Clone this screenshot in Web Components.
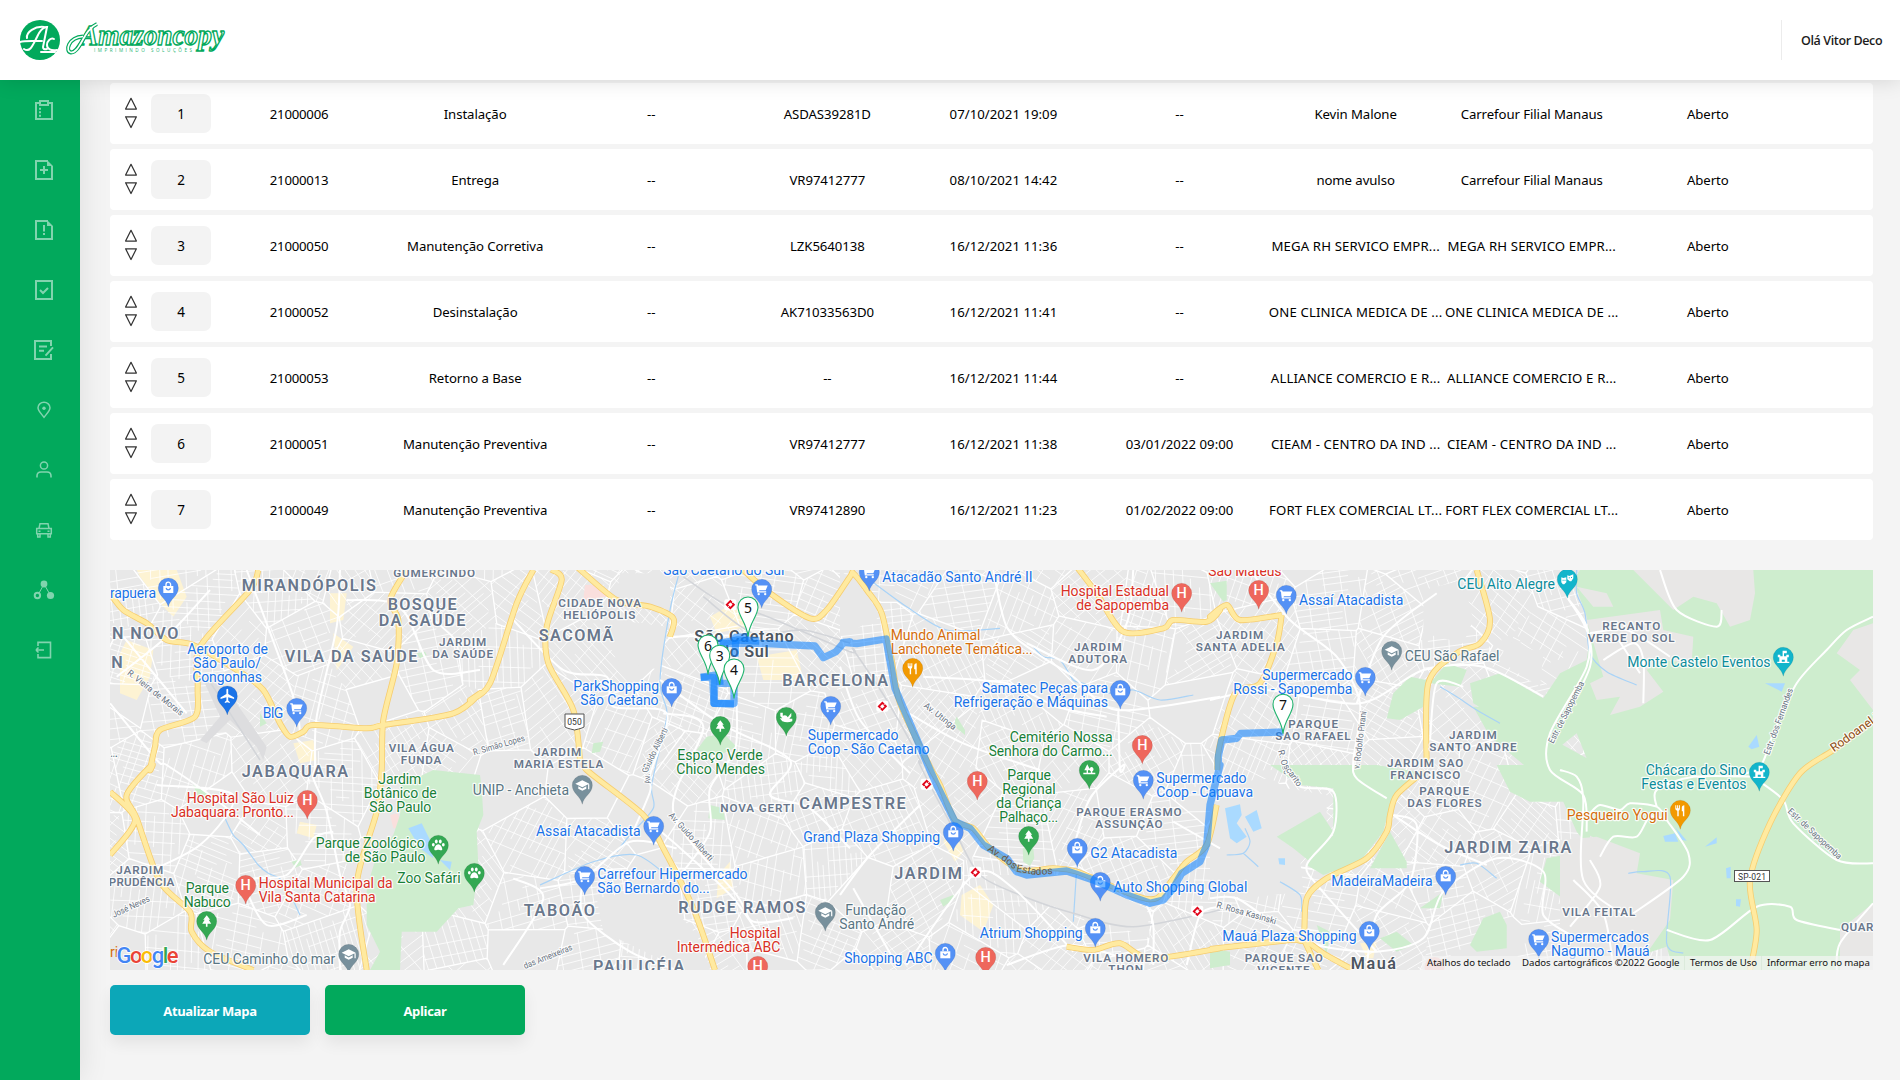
<!DOCTYPE html>
<html lang="pt-BR">
<head>
<meta charset="utf-8">
<title>Amazoncopy</title>
<style>
  html, body { margin: 0; height: 100%; overflow: hidden; }
  body { background: #f4f4f4; font-family: "Noto Sans", "Open Sans", sans-serif; color: #000; }
</style>
</head>
<body>
<app-shell>
  <app-header slot="header" user="Olá Vitor Deco"></app-header>
  <side-nav slot="nav"></side-nav>
  <ticket-list></ticket-list>
  <route-map></route-map>
  <action-bar>
    <action-button tone="teal">Atualizar Mapa</action-button>
    <action-button tone="green">Aplicar</action-button>
  </action-bar>
</app-shell>

<script>
class Base extends HTMLElement {
  connectedCallback() {
    if (this.shadowRoot) return;
    this.attachShadow({ mode: 'open' }).innerHTML = this.view();
  }
}

customElements.define('app-shell', class extends Base {
  view() {
    return `<style>
      :host { display: flex; flex-direction: column; width: 1900px; height: 1080px; overflow: hidden; }
      .body { display: flex; flex: 1; min-height: 0; }
      main { flex: 1; box-sizing: border-box; padding: 3px 27px 0 30px; display: flex; flex-direction: column; }
    </style>
    <slot name="header"></slot>
    <div class="body"><slot name="nav"></slot><main><slot></slot></main></div>`;
  }
});

customElements.define('app-header', class extends Base {
  view() {
    return `<style>
      :host { display: flex; position: relative; z-index: 2; height: 80px; flex: none; background: #fff; align-items: center; justify-content: space-between; padding: 0 17px 0 20px; box-shadow: 0 0 20px rgba(0,0,0,.14); }
      .user { display: flex; align-items: center; height: 40px; border-left: 1px solid #ececec; padding-left: 19px; font: 600 12.5px "Open Sans", sans-serif; color: #1c1c1c; letter-spacing: -.38px; white-space: nowrap; }
      .user span { width: 82px; }
      svg { display: block; }
    </style>
    <svg width="210" height="44" viewBox="20 18 210 44">
      <circle cx="40" cy="40" r="20" fill="#02a95c"/>
      <g fill="none" stroke="#fff" stroke-width="2" stroke-linecap="round">
        <path d="M20 42q3-1 12-1h10M24 49c6 4 9-4 13-12q4-9 9-10h1l-4 20q0 3 4 2"/>
        <path d="M27 38c-1-6 8-12 17-11M54 39c-3-2-7 2-7 6s4 6 10 5M41 52h14"/>
      </g>
      <g font-family="Liberation Serif" font-style="italic" font-weight="700">
        <path d="M97 24C83 30 81 52 71 52.500c-6-1-3-15 12-16" fill="none" stroke="#02a95c" stroke-width="4"/>
        <text x="80" y="45" font-size="30" fill="#fff" stroke="#02a95c" stroke-width="1.400" textLength="144" lengthAdjust="spacingAndGlyphs">Amazoncopy</text>
        <path d="M97 24C83 30 81 52 71 52.500c-6-1-3-15 12-16" fill="none" stroke="#fff" stroke-width="1.700"/>
      </g>
      <text x="94" y="52.300" font-family="Open Sans" font-size="4.600" fill="#1eb36f" textLength="98">IMPRIMINDO SOLUÇÕES</text>
    </svg>
    <div class="user"><span>${this.getAttribute('user')}</span></div>`;
  }
});

customElements.define('side-nav', class extends Base {
  view() {
    const icons = [
      '<path d="M-5-7H-8V9H8V-7H5"/><path d="M-4-9H4V-5H-4z"/><path d="M-5-1.2h2M-5 2.3h2M-5 5.8h2"/>',
      '<path d="M4-9H-8V9H8V-4"/><path d="M3-10L9-4H3z" fill="#fff" stroke="none"/><path d="M0-4V4M-4 0H4"/>',
      '<path d="M4-9H-8V9H8V-4"/><path d="M3-10L9-4H3z" fill="#fff" stroke="none"/><path d="M0-5V1.5M0 3v2"/>',
      '<path d="M-8-9H8V9H-8z"/><path d="M-4 0l3 3 5-5"/>',
      '<path d="M7-4V-9H-9V9H7V4"/><path d="M-5-3.4H3M-5 .8H0M1.5 5.7L9-2.6"/>',
      '<path stroke-width="1.500" d="M0 7.300C-2 4.500-6 1-6-2.200A6 5.500 0 0 1 6-2.200C6 1 2 4.500 0 7.300z"/><circle cy="-1.700" r="1.700" fill="#fff" stroke="none"/>',
      '<circle stroke-width="1.500" cy="-4.500" r="3.600"/><path stroke-width="1.600" d="M-7 7.500V6Q-7 2-3 2H3Q7 2 7 6V7.500"/>',
      '<g stroke-width="1.500"><path d="M-5-1.500L-4-6.300H4L5-1.500M-7.300-1.500H7.300V3.700H-7.300zM-6.300 4v3H-4V4M6.300 4v3H4V4"/><path d="M-5.500 1.200h2M3.500 1.200h2"/></g>',
      '<path stroke-width="1" d="M0-6L-6 5M0-6L6.500 5.500"/><circle cy="-6" r="3.400" fill="#fff" stroke="none"/><circle cx="6.500" cy="5.500" r="3.600" fill="#fff" stroke="none"/><circle cx="-6.600" cy="5.500" r="2.700" fill="#02a95c"/>',
      '<path stroke-width="1.600" d="M-6-4V-7.600H6.500V7.600H-6V4M0 0H-8M-8 0l2.500-2.500M-8 0l2.500 2.500"/>'
    ];
    return `<style>
      :host { display: flex; flex-direction: column; width: 80px; flex: none; background: #02a95c; box-shadow: 0 0 30px rgba(0,0,0,.1); }
      a { display: flex; height: 60px; align-items: center; justify-content: center; padding-left: 8px; }
      svg { opacity: .5; }
    </style>` + icons.map(i => `<a><svg width="24" height="24" viewBox="-12 -12 24 24" fill="none" stroke="#fff" stroke-width="2">${i}</svg></a>`).join('');
  }
});

customElements.define('ticket-row', class extends Base {
  view() {
    const cells = this.getAttribute('cells').split('|');
    return `<style>
      :host { display: flex; height: 61px; background: #fff; border-radius: 4px; align-items: center; }
      .idx { display: flex; width: 101px; align-items: center; flex: none; }
      .arrows { display: flex; flex-direction: column; gap: 4px; margin: 0 13px 2px 14px; }
      svg { display: block; }
      .num { width: 60px; height: 39px; border-radius: 7px; background: #f3f3f3; display: flex; align-items: center; justify-content: center; font-size: 13.500px; }
      .cell { width: 176.100px; flex: none; text-align: center; font-size: 13.200px; letter-spacing: -.08px; white-space: nowrap; }
      .cell.cut { letter-spacing: .14px; }
      .cell.digits { letter-spacing: -.22px; }
      .cell.when { letter-spacing: .02px; }
    </style>
    <div class="idx"><div class="arrows">
      <svg width="14" height="14" viewBox="0 0 14 14" fill="#fff" stroke="#333" stroke-width="1.250" stroke-linejoin="round"><path d="M7 1.300L12.400 12H1.600z"/></svg>
      <svg width="14" height="14" viewBox="0 0 14 14" fill="#fff" stroke="#333" stroke-width="1.250" stroke-linejoin="round"><path d="M7 12.500L1.600 1.800H12.400z"/></svg>
    </div><div class="num">${cells[0]}</div></div>` +
    cells.slice(1).map(c => `<div class="cell ${c.endsWith('...') ? 'cut' : /\d\d:\d\d/.test(c) ? 'when' : /^\d+$/.test(c) ? 'digits' : ''}">${c}</div>`).join('');
  }
});

customElements.define('ticket-list', class extends Base {
  view() {
    const rows = [
      '1|21000006|Instalação|--|ASDAS39281D|07/10/2021 19:09|--|Kevin Malone|Carrefour Filial Manaus|Aberto',
      '2|21000013|Entrega|--|VR97412777|08/10/2021 14:42|--|nome avulso|Carrefour Filial Manaus|Aberto',
      '3|21000050|Manutenção Corretiva|--|LZK5640138|16/12/2021 11:36|--|MEGA RH SERVICO EMPR...|MEGA RH SERVICO EMPR...|Aberto',
      '4|21000052|Desinstalação|--|AK71033563D0|16/12/2021 11:41|--|ONE CLINICA MEDICA DE ...|ONE CLINICA MEDICA DE ...|Aberto',
      '5|21000053|Retorno a Base|--|--|16/12/2021 11:44|--|ALLIANCE COMERCIO E R...|ALLIANCE COMERCIO E R...|Aberto',
      '6|21000051|Manutenção Preventiva|--|VR97412777|16/12/2021 11:38|03/01/2022 09:00|CIEAM - CENTRO DA IND ...|CIEAM - CENTRO DA IND ...|Aberto',
      '7|21000049|Manutenção Preventiva|--|VR97412890|16/12/2021 11:23|01/02/2022 09:00|FORT FLEX COMERCIAL LT...|FORT FLEX COMERCIAL LT...|Aberto'
    ];
    return `<style>:host { display: flex; flex-direction: column; gap: 5px; }</style>` +
      rows.map(r => `<ticket-row cells="${r}"></ticket-row>`).join('');
  }
});

customElements.define('action-bar', class extends Base {
  view() { return `<style>:host { display: flex; gap: 15px; margin-top: 15px; }</style><slot></slot>`; }
});

customElements.define('action-button', class extends Base {
  view() {
    return `<style>
      :host { display: block; }
      button { width: 200px; height: 50px; border: 0; border-radius: 5px; color: #fff; font: 700 13px "Open Sans", sans-serif; letter-spacing: -.38px; padding: 2px 0 0; box-shadow: 0 8px 16px rgba(0,0,0,.07); background: ${this.getAttribute('tone') === 'teal' ? '#0ca7b8' : '#02a95c'}; }
    </style><button><slot></slot></button>`;
  }
});

/* ---- map data: every point is tile letter + tile units (3 units = 1px) ---- */
const TILES = { A: [100, 560], B: [100, 765], C: [470, 560], D: [470, 765], E: [840, 560], F: [840, 765], G: [1210, 560], H: [1210, 765], K: [1560, 560] };
const at = (t, x, y) => [TILES[t][0] + x / 3, TILES[t][1] + y / 3];
const f1 = n => Math.round(n * 10) / 10;
function pts(s) {
  let t = 'A';
  return s.trim().split(/\s+/).map(k => {
    if (/[A-Z]/.test(k[0])) { t = k[0]; k = k.slice(1); }
    const [x, y] = k.split(',').map(Number);
    return at(t, x, y);
  });
}
const poly = s => 'M' + pts(s).map(p => p.map(f1).join(' ')).join('L');
function curve(s) {
  const p = pts(s); let d = 'M' + p[0].map(f1).join(' ');
  for (let i = 0; i < p.length - 1; i++) {
    const a = p[i - 1] || p[i], b = p[i], c = p[i + 1], e = p[i + 2] || c;
    d += 'C' + [b[0] + (c[0] - a[0]) / 7, b[1] + (c[1] - a[1]) / 7, c[0] - (e[0] - b[0]) / 7, c[1] - (e[1] - b[1]) / 7, c[0], c[1]].map(f1).join(' ');
  }
  return d;
}

/* Local streets: irregular districts, each with its own block grid. */
function streets() {
  let seed = 77; const rnd = () => (seed = (seed * 16807) % 2147483647) / 2147483647;
  const seeds = [];
  for (let j = -1; j < 8; j++) for (let i = -1; i < 27; i++)
    seeds.push([110 + i * 62 + rnd() * 56, 570 + j * 58 + rnd() * 52]);
  let thin = '', mid = '';
  for (const s of seeds) {
    let cell = [[s[0] - 80, s[1] - 80], [s[0] + 80, s[1] - 80], [s[0] + 80, s[1] + 80], [s[0] - 80, s[1] + 80]];
    for (const o of seeds) {
      if (o === s || Math.hypot(o[0] - s[0], o[1] - s[1]) > 200) continue;
      const mx = (s[0] + o[0]) / 2, my = (s[1] + o[1]) / 2, nx = o[0] - s[0], ny = o[1] - s[1];
      const side = p => (p[0] - mx) * nx + (p[1] - my) * ny;
      const out = [];
      cell.forEach((p, i) => {
        const q = cell[(i + 1) % cell.length], a = side(p), b = side(q);
        if (a <= 0) out.push(p);
        if (a * b < 0) { const u = a / (a - b); out.push([p[0] + (q[0] - p[0]) * u, p[1] + (q[1] - p[1]) * u]); }
      });
      cell = out;
    }
    if (cell.length < 3) continue;
    const open = rnd() < .1;
    if (rnd() < .75) mid += 'M' + cell.map(p => p.map(f1).join(' ')).join('L') + 'Z';
    if (open) continue;
    const ang = rnd() * Math.PI;
    [[ang, 6 + rnd() * 4], [ang + Math.PI / 2 + (rnd() - .5) * .3, 9 + rnd() * 10]].forEach(([a, gap]) => {
      const dx = Math.cos(a), dy = Math.sin(a);
      for (let k = -80; k < 80; k += gap * (.8 + rnd() * .4)) {
        const hits = [];
        cell.forEach((p, i) => {
          const q = cell[(i + 1) % cell.length];
          const h = v => (v[0] - s[0]) * -dy + (v[1] - s[1]) * dx - k;
          const A = h(p), B = h(q);
          if (A * B < 0) { const u = A / (A - B); hits.push([p[0] + (q[0] - p[0]) * u, p[1] + (q[1] - p[1]) * u]); }
        });
        if (hits.length === 2) {
          const [p, q] = hits, u = rnd() < .45 ? rnd() * .5 : 0, v = rnd() < .35 ? 1 - rnd() * .4 : 1;
          const L = w => f1(p[0] + (q[0] - p[0]) * w) + ' ' + f1(p[1] + (q[1] - p[1]) * w);
          thin += 'M' + L(u) + 'L' + L(v);
        }
      }
    });
  }
  return [thin, mid];
}

const PARKS = [
  'B905,60 1000,15 1140,30 D35,70 40,150 20,200 25,300 B1120,420 1075,430 1010,500 905,500 900,615 810,615 840,560 800,480 800,370 830,270 880,210 900,150',
  'K60,30 939,30 939,1230 340,1230 320,1160 260,1180 280,1100 200,1080 230,950 150,860 60,810 70,700 0,630 G1140,620 1100,520 1000,600 900,560 870,480 790,430 780,370 870,340 1000,415 1050,340 1130,300 1140,230 1130,170 1090,60',
  'H860,0 1140,0 1140,250 1100,200 1060,110 960,110 900,80','H180,0 500,0 620,20 540,120 520,200 450,290 340,330 290,300 370,210 370,70 270,60','H200,215 330,140 370,200 300,290 250,250',
  'H540,200 590,290 590,310 480,310','G530,475 550,400 600,350 650,360 640,440 570,480','G660,370 710,310 770,330 750,380','G790,440 850,440 1140,600 1140,630 960,630 840,530',
  'H630,430 700,380 690,430','H780,540 820,460 870,440 890,480 890,550 800,560','H990,350 1010,280 1140,255 1085,420','H510,520 560,500 610,540 560,560',
  'C680,570 710,530 760,520 800,560 740,590','E345,480 350,470 375,510 375,525 345,500','F548,250 580,250 583,280 570,303 550,290','D720,120 760,130 765,165 715,160','B280,60 330,90 300,115','B575,290 600,283 605,300 585,308','A480,460 500,490 480,500','A950,280 975,275 980,285 960,295','C370,550 400,545 390,575 365,580','H0,550 60,560 60,600 0,610','H320,480 360,500 350,570','F300,405 340,390 345,400 310,425','G0,70 50,62 50,120 40,125'
];
const GREYS = [
  'K80,180 300,150 310,210 400,230 395,310 300,300 260,330 310,395 240,440 150,465 180,410 110,420 90,370 130,350','K220,30 580,30 585,100 570,180 510,200 470,130 400,110 340,150','K830,280 880,210 939,190 939,450 870,360 900,330','K50,80 140,100 160,140 100,140','K0,840 110,830 240,880 230,940 340,960 330,1080 260,1180 0,1230','K840,1110 939,1030 939,1230 840,1230'
];
const SAND = ['A110,30 230,30 260,110 220,170 180,130 120,50','A80,240 160,270 150,350 110,420 60,400 60,280','A690,100 740,100 730,180 690,190','A700,220 760,260 740,290 710,330','C720,170 790,130 830,200 740,220','C860,290 980,270 1000,360 880,360','F340,180 370,260 345,290 310,230','F365,390 420,360 460,420 430,500 360,450','B600,170 650,180 640,220 590,205','H450,535 500,530 490,580 470,580','D745,330 780,290 790,370 740,400','A580,550 640,540 650,600 600,610'];
const WATER = ['B925,190 965,175 990,225 1000,280 960,250','B1020,285 1055,290 1050,315','H45,130 90,118 95,150 80,175 110,215 80,235 60,220 55,190','H105,155 140,135 155,190 130,200','H205,280 225,280 225,300 208,298','K310,828 345,820 355,845 315,845','K435,860 470,832 470,850','K345,800 380,842 365,840','K565,560 590,525 598,560 575,568','K498,925 512,920 512,955 500,955','K615,370 675,370 665,395','K528,1018 543,1018 540,1040 528,1038'];
const RIVERS = ['C630,30 600,150 570,360 590,450 585,500 D545,60 550,130 480,210 440,260','E90,60 200,140 320,210 480,205','E580,260 610,290 660,300 700,360 730,370 800,400 880,390 960,420 1060,405','B375,160 400,210 430,240 475,300 505,325 550,350 600,450','H50,270 100,265 120,230 105,190','H100,265 145,305','K50,30 50,100 75,160 90,280 140,335 230,375','K205,940 250,935 330,950 320,1150 370,1180','H210,350 270,390 275,440','G690,380 740,410 800,450 870,490','D210,360 370,290 500,270 600,340','F710,310 700,470','H750,300 800,295 860,340'];
const RAILS = ['C640,50 760,130 880,165 1140,275 E40,270 140,420 240,600 F240,0 350,210 420,330 540,390 700,445 880,485 1140,435','C700,110 850,220 1000,210 1140,250','A320,350 480,600'];
const AVENUES = ['A440,30 580,410 600,520','A720,30 710,200 650,470 645,620 B640,40 680,140 720,330 750,420 720,500 720,615','A50,350 200,230 330,90','A30,430 170,600 B200,0 330,90 480,210','A70,230 260,460','B170,60 400,90 300,240 100,340','B700,200 640,220 560,330 440,350 500,480 620,450','A740,120 900,140 1000,330 1140,330','C130,180 280,330 410,350 430,440 590,460 D540,30 540,80 480,220','C600,230 850,230 870,290','C570,360 750,490 960,600 D900,90 1020,130 1140,250','C580,460 700,500 D610,140 800,390 850,470 970,460','C800,430 795,570 D720,70 720,200 640,320','D210,370 340,340 480,230 620,250','D340,340 340,450 480,560 620,615','D100,600 220,400 130,340','D440,90 620,240 790,400 900,560','E460,30 500,200 590,280 700,350 830,450 1140,410','E190,450 370,550 600,630','E835,450 840,630 F850,0 750,100 700,250','E560,250 760,330 860,190 880,30','E0,320 60,480 210,640','E250,350 500,370 650,440 800,470','F0,390 90,270 240,120','F200,600 400,330 520,370 700,560','F1000,170 1140,250','F920,420 940,480 940,600','F40,370 170,600','F1040,600 1080,450 1140,425','F500,600 690,540 850,580','G120,30 240,180 380,290 450,430 430,600 H440,40 530,100','G0,420 170,390 450,430 640,330 820,320 1000,410','G680,100 520,230 440,430','G760,380 680,370 660,540','G1070,110 1130,200 1130,320 1020,520 1020,630 H1120,90 1130,200','H0,400 80,400 200,480 320,540 500,560 640,520 700,380 860,280 1000,320 1000,450 1100,520','H230,0 270,65 370,80 370,200 290,300 330,370 500,560','H550,150 620,180 600,350 500,450 470,600','H550,150 690,240 830,300','K20,110 80,210 90,320 0,500','K939,170 860,210 800,270 710,370 640,520 600,620 520,650','K600,665 670,720 700,790 830,900 939,910','K320,780 385,880 370,950 220,1060','K320,780 290,740 210,730 180,750 120,735 90,760','K320,780 270,770 230,830 160,830 120,890','K290,740 290,690 400,650 600,650','K320,1110 450,1140 590,1040 690,1040 710,1080 840,1110','K939,1030 840,1150 830,1230','K0,630 50,650 70,720 70,960 200,1070','K300,30 350,150 470,200 485,150','K90,220 200,210 330,290','K130,300 220,250 250,300 250,430','K170,230 240,340','K40,960 130,1060 160,1220','K30,1100 120,980 90,900'];
const HIGHWAYS = ['A30,100 70,150 140,190 200,240 280,255 410,330 490,390 540,490 570,530 610,515 640,495 800,505 850,495 1060,460 1140,400 C0,420 60,370 140,130 190,30','A475,30 450,90 300,260 293,380 285,470 180,510 165,560 150,630 B155,0 80,90 110,160 180,350 270,440 275,500 330,560 460,615','B30,80 105,165 30,270','A920,30 870,120 895,180 890,310 850,480 845,630 B830,140 770,360 800,615','C245,30 275,60 230,200 235,310 310,450 330,600','C350,600 D350,15 520,150 580,250 670,430 735,615','C320,20 440,120 540,140 610,175 600,230','C820,30 900,100 1020,175 1070,150 1140,50 E40,40 80,90 125,160 155,300 180,430 270,620 F300,60 345,165 400,190 450,250 540,315 640,310 710,320 880,390 950,400 1000,340 1040,290 1100,240 1130,120','G22,630 28,560 75,400 150,370 200,250 215,165','E710,20 770,100 850,215 970,205 1000,180 1100,185 1140,150 G0,170 50,135 90,180 215,165','G800,30 840,180 810,250 740,280 655,370 650,620','H640,20 560,90 540,150 530,200 470,280 350,340 290,400 280,520 240,525 0,552','F680,545 760,555 840,535 930,580 1140,550','H280,520 340,565 430,615','H280,520 325,615','K939,480 820,570 720,640 630,790 570,960 590,1110 570,1230'];
const ROUTE = ['C750,250 868,250 1035,258 1060,293 1098,275 1122,247 1140,246 E10,247 50,251 138,237 165,385 180,420 270,630 F290,60 345,170 390,190 430,240 500,280 530,320 560,330 680,318 760,345 860,390 930,415 970,405 1000,370 1025,325 1080,290 1100,240 1110,120 1140,0 G25,630 25,590 35,540 80,535 92,520 220,516','C838,230 797,232 795,290','C868,243 800,240 745,250','C692,352 728,352 732,430 792,430 792,370 745,370','C692,352 735,345 732,430 792,432','C750,375 745,310'];

const COLORS = { b: '#1a73e8', r: '#d93025', g: '#188038', t: '#0d8c9b', o: '#d56e0c', s: '#5a7684', n: '#69778c', N: '#69778c', C: '#4c5560' };
const LABELS = `b|A|30|168|115|rapuera
N|A|425|828|93|MIRANDÓPOLIS
n|A|880|1125|52|GUMERCINDO
N|A|863|1070|151|BOSQUE
N|A|836|1096|199|DA SAÚDE
N|A|36|235|238|N NOVO
N|A|34|64|325|N
b|A|262|504|283|Aeroporto de
b|A|280|483|325|São Paulo/
b|A|277|486|367|Congonhas
N|A|554|952|305|VILA DA SAÚDE
n|A|1017|1159|259|JARDIM
n|A|997|1179|295|DA SAÚDE
b|A|488|550|475|BIG
n|A|866|1061|577|VILA ÁGUA
n|A|902|1024|613|FUNDA
s|A|30|55|590|...
N|B|425|744|37|JABAQUARA
r|B|260|582|115|Hospital São Luiz
r|B|213|582|157|Jabaquara: Pronto...
g|B|835|964|57|Jardim
g|B|791|1010|99|Botânico de
g|B|808|994|142|São Paulo
g|B|647|974|250|Parque Zoológico
g|B|734|976|292|de São Paulo
g|B|892|1082|354|Zoo Safári
n|B|49|190|327|JARDIM
n|B|26|223|363|PRUDÊNCIA
r|B|476|878|370|Hospital Municipal da
r|B|476|827|412|Vila Santa Catarina
g|B|257|387|385|Parque
g|B|251|392|427|Nabuco
s|B|310|706|597|CEU Caminho do mar
b|C|580|943|45|São Caetano do Sul
n|C|265|513|142|CIDADE NOVA
n|C|280|496|178|HELIÓPOLIS
N|C|206|430|242|SACOMÃ
C|C|673|971|245|São Caetano
C|C|750|896|292|do Sul
N|C|937|1254|378|BARCELONA
b|C|310|567|394|ParkShopping
b|C|331|566|436|São Caetano
n|C|192|334|587|JARDIM
n|C|131|400|624|MARIA ESTELA
g|C|622|878|600|Espaço Verde
g|C|619|885|642|Chico Mendes
b|C|1013|1285|541|Supermercado
b|C|1013|1378|583|Coop - São Caetano
s|D|8|297|90|UNIP - Anchieta
n|D|751|973|141|NOVA GERTI
N|D|988|1307|131|CAMPESTRE
b|D|198|512|213|Assaí Atacadista
b|D|1000|1410|231|Grand Plaza Shopping
b|D|382|833|342|Carrefour Hipermercado
b|D|382|719|385|São Bernardo do...
N|D|161|375|452|TABOÃO
N|D|625|1006|443|RUDGE RAMOS
r|D|779|931|519|Hospital
r|D|620|931|561|Intermédica ABC
N|D|369|643|621|PAULICÉIA
b|E|127|578|67|Atacadão Santo André II
r|E|662|987|108|Hospital Estadual
r|E|709|987|150|de Sapopemba
o|E|152|421|241|Mundo Animal
o|E|152|578|283|Lanchonete Temática...
n|E|702|845|274|JARDIM
n|E|685|861|310|ADUTORA
b|E|425|804|400|Samatec Peças para
b|E|341|804|442|Refrigeração e Máquinas
g|E|509|818|547|Cemitério Nossa
g|E|446|818|589|Senhora do Carmo...
g|F|502|633|46|Parque
g|F|487|647|88|Regional
g|F|469|665|130|da Criança
g|F|478|655|172|Palhaço...
n|F|709|1025|154|PARQUE ERASMO
n|F|766|968|190|ASSUNÇÃO
b|F|949|1220|55|Supermercado
b|F|949|1239|97|Coop - Capuava
b|F|751|1012|280|G2 Atacadista
N|F|163|366|341|JARDIM
b|F|820|1222|382|Auto Shopping Global
s|F|16|199|451|Fundação
s|F|-2|223|493|Santo André
b|F|419|728|519|Atrium Shopping
b|F|13|278|595|Shopping ABC
n|F|730|985|591|VILA HOMERO
n|F|805|909|625|THON
r|G|-5|215|49|São Mateus
b|G|267|580|136|Assaí Atacadista
t|G|742|1035|88|CEU Alto Alegre
n|G|18|160|238|JARDIM
n|G|-43|224|274|SANTA ADELIA
s|G|584|868|304|CEU São Rafael
b|G|157|428|361|Supermercado
b|G|70|427|402|Rossi - Sapopemba
n|G|235|384|504|PARQUE
n|G|196|422|541|SAO RAFAEL
n|G|717|860|537|JARDIM
n|G|658|920|574|SANTO ANDRE
n|G|531|760|622|JARDIM SAO
n|H|541|751|43|FRANCISCO
n|H|628|777|91|PARQUE
n|H|592|815|127|DAS FLORES
N|H|703|1084|265|JARDIM ZAIRA
b|H|364|668|363|MadeiraMadeira
b|H|37|440|528|Mauá Plaza Shopping
n|H|104|338|591|PARQUE SAO
n|H|142|299|627|VICENTE
C|H|422|558|612|Mauá
n|K|127|301|210|RECANTO
n|K|83|344|247|VERDE DO SOL
t|K|202|632|321|Monte Castelo Eventos
t|K|257|559|646|Chácara do Sino
t|K|244|560|688|Festas e Eventos
o|K|20|323|781|Pesqueiro Yogui
n|K|7|226|1068|VILA FEITAL
n|K|843|1020|1113|QUARTA D
b|K|-27|267|1147|Supermercados
b|K|-27|269|1189|Nagumo - Mauá`;
/* road names: tile|x|y|angle|length|text */
const ROADS = `A|80|342|38|205|R. Vieira de Morais
B|42|458|-25|120|José Neves
C|12|586|-16|160|R. Simão Lopes
C|535|630|-64|135|Guido Aliberti
D|595|152|48|185|Av. Guido Aliberti
D|543|55|-100|50|Av. G
D|165|612|-22|155|das Ameixeiras
E|250|440|38|115|Av. Utinga
G|204|572|75|75|R. Osc
G|448|628|-83|175|v. Rodolfo Pirani
H|220|5|55|75|scarito
H|18|427|16|185|R. Rosa Kasinski
G|1030|552|-63|205|Estr. de Sapopemba
K|628|586|-70|210|Estr. dos Fernandes
K|682|756|43|210|Estr. de Sapopemba`;

const PINC = { b: '#5491f5', B: '#1a73e8', r: '#ee675c', g: '#34a853', t: '#12b5cb', o: '#f29900', s: '#78909c' };
const GLYPH = {
  bag: '<path fill="#fff" d="M-5-2H5V5H-5z"/><path d="M-2.300-2V-3.500A2.300 2.300 0 0 1 2.300-3.500V-2" fill="none" stroke="#fff" stroke-width="1.300"/><path d="M-2.200 0A2.300 2.600 0 0 0 2.200 0" fill="none" stroke="#5491f5" stroke-width="1.200"/>',
  cart: '<path fill="#fff" d="M-6.500-5h2.300l.6 1.200H6L4 1H-2.200L-3 2H4.500V3.200H-4.500L-5-.2-5.300-3.800H-6.500z"/><circle cx="-3" cy="4.800" r="1.200" fill="#fff"/><circle cx="3.500" cy="4.800" r="1.200" fill="#fff"/>',
  H: '<text text-anchor="middle" y="5" font-family="Roboto" font-size="14.500" font-weight="500" fill="#fff">H</text>',
  cap: '<path fill="#fff" d="M0-5L7-1.500 0 2-7-1.500zM-4 1L0 3.200 4 1V3.500L0 5.500-4 3.500zM5.800-1H7V4H5.800z"/>',
  tree: '<path fill="#fff" d="M0-6L3.500-1.500H2L4.500 2.500H.8V5.500H-.8V2.500H-4.500L-2-1.500H-3.500z"/>',
  paw: '<g fill="#fff"><ellipse cx="-5" cy="-.5" rx="1.400" ry="1.700"/><ellipse cx="-2" cy="-3.800" rx="1.400" ry="1.900"/><ellipse cx="2" cy="-3.800" rx="1.400" ry="1.900"/><ellipse cx="5" cy="-.5" rx="1.400" ry="1.700"/><path d="M0-1C2-1 4 2 4 4S1 4.500 0 4.500-4 6-4 4-2-1 0-1z"/></g>',
  fork: '<path fill="#fff" d="M-5-5h1v3h.8v-3h1v3h.8v-3h1V-1.500Q-.4 0-1.600.5V6H-3V.5Q-5 0-5-1.500zM1.500-2.500Q1.500-5 4-5V6H2.600V1H1.500z"/>',
  fort: '<path fill="#fff" d="M-4 5.500V0H-5.500V-2.500H-3V-1H-.7V-6.500H3.500V-4H.7V-1H3V-2.500H5.500V0H4V5.500H1.500V2.500H-1.500V5.500zM-6 4.500H6V5.700H-6z"/>',
  plane: '<path fill="#fff" d="M-.9-6.500Q0-8 .9-6.500V-2L6.800 1.500V3L.9 1.200V4.500L2.500 6V7L0 6.200-2.500 7V6L-.9 4.500V1.200L-6.800 3V1.500L-.9-2z"/>',
  masks: '<path fill="#fff" d="M-6-2l2 .8 3-.8V3L-3 5H-4.500L-6 3zM0-4l2 .8L6-5V-1L4 2H2.500L0 0z"/><path d="M-4.700 1h1M-2.800 1h1M1.500-1.500h1M3.700-1.800h1" stroke="#12b5cb" stroke-width="1"/>',
  turtle: '<path fill="#fff" d="M-6-4.500H-3.500V-1.500Q0-3 1.500 0L5-4.500V-1L3 1.500H6V4Q1 6-4 4L-6.500 1H-4L-6-1z"/>',
  trees: '<path fill="#fff" d="M-2-6L1 0H-1.300V2.500H1.500V1A2 2.200 0 1 1 3 1V2.500H6V4H-6V2.500H-2.700V0H-5z"/>'
};
const PINS = `A|205|84|b|bag A|382|408|B|plane A|590|445|b|cart B|622|106|r|H B|437|361|r|H B|320|469|g|tree B|1015|241|g|paw B|1123|325|g|paw B|746|568|s|cap
C|875|88|b|cart C|605|385|b|bag C|751|499|g|tree C|949|472|g|turtle C|1082|439|b|cart D|337|61|s|cap D|551|184|b|cart D|344|334|b|cart D|1066|442|s|cap D|863|604|r|H
E|88|37|b|cart E|218|325|o|fork E|841|391|b|bag E|907|556|r|H E|1025|100|r|H E|748|631|g|trees F|412|49|r|H F|566|214|g|tree F|340|202|b|bag F|910|46|b|cart F|712|250|b|bag F|781|352|b|bag F|766|490|b|bag F|316|565|b|bag F|437|577|r|H
G|146|91|r|H G|229|106|b|cart G|545|274|s|cap G|466|352|b|cart G|1072|58|t|masks H|707|334|b|bag H|478|499|b|bag H|986|523|b|cart K|670|292|t|fort K|598|637|t|fort K|361|751|o|fork`;
const STATIONS = [['C', 781, 134], ['E', 127, 439], ['F', 260, 58], ['F', 406, 322], ['F', 1072, 439]];
const STOPS = [['C', 834, 141, 5], ['C', 714, 255, 6], ['C', 749, 286, 3], ['C', 792, 327, 4], ['G', 219, 433, 7]];

customElements.define('route-map', class extends Base {
  view() {
    const [thin, mid] = streets();
    const area = (list, fill) => `<path fill="${fill}" d="${list.map(s => poly(s) + 'Z').join('')}"/>`;
    const line = (list, stroke, w) => `<path fill="none" stroke="${stroke}" stroke-width="${w}" stroke-linejoin="round" d="${list.map(curve).join('')}"/>`;
    const labels = LABELS.split('\n').map(l => {
      const [k, t, x1, x2, y, text] = l.split('|'), [px, py] = at(t, +x1, +y);
      const big = k === 'N' || k === 'C', st = big || k === 'n';
      return `<text x="${f1(px)}" y="${f1(py)}" textLength="${f1((x2 - x1) / 3)}" fill="${COLORS[k]}" font-size="${k === 'n' ? 11.7 : big ? 16.2 : 14}" font-weight="${st ? 600 : 400}">${text}</text>`;
    }).join('');
    const roads = ROADS.split('\n').map(l => {
      const [t, x, y, a, len, text] = l.split('|'), [px, py] = at(t, +x, +y);
      return `<text transform="translate(${f1(px)} ${f1(py)}) rotate(${a})" textLength="${f1(len / 3)}" lengthAdjust="spacingAndGlyphs" font-size="8.800" fill="#667180">${text}</text>`;
    }).join('');
    const pins = PINS.split(/\s+/).map(l => {
      const [t, x, y, c, g] = l.split('|'), [px, py] = at(t, +x, +y);
      return `<g transform="translate(${f1(px)} ${f1(py)})"><path fill="${PINC[c]}" stroke="#0003" stroke-width=".4" d="M0 19C-1.500 11-10.100 8-10.100 0A10.100 10.100 0 0 1 10.100 0C10.100 8 1.500 11 0 19z"/>${GLYPH[g]}</g>`;
    }).join('');
    const stations = STATIONS.map(([t, x, y]) => { const [a, b] = at(t, x, y); return `<g transform="translate(${a} ${b})"><rect x="-6" y="-5.500" width="12" height="11" rx="2" fill="#fff"/><path d="M-3.500 0L0-3.500 3.500 0 0 3.500z" fill="none" stroke="#e1061b" stroke-width="1.900"/><path d="M-3 3L-1 1M1-1L3-3" stroke="#fff" stroke-width=".8"/></g>`; }).join('');
    const stops = STOPS.map(([t, x, y, n]) => { const [a, b] = at(t, x, y); return `<g transform="translate(${f1(a)} ${f1(b)})"><path fill="#fff" stroke="#1eb36d" stroke-width="1.100" d="M0 29.500C-1 16-10 9-10 0A10 10 0 0 1 10 0C10 9 1 16 0 29.500z"/><text text-anchor="middle" y="6" font-family="Noto Sans" font-size="14" fill="#111" stroke="none">${n}</text></g>`; }).join('');
    const r = at('K', 822, 577), est = [at('F', 441, 256), at('F', 492, 290), at('F', 532, 320), at('F', 590, 330), at('F', 670, 324)];
    return `<style>
      :host { display: block; position: relative; height: 400px; margin-top: 30px; overflow: hidden; flex: none; background: #e8e8e8; }
      svg { display: block; width: 1763px; height: 400px; }
      .legal { position: absolute; right: 0; bottom: 0; display: flex; height: 14px; background: rgba(245,245,245,.7); font: 9.600px/13px "Noto Sans", sans-serif; color: #111; white-space: nowrap; }
      .legal span { box-sizing: border-box; padding-left: 5px; }
      .legal span + span { border-left: 1px solid #dcebdc; }
      .legal span:last-child { letter-spacing: -.08px; }
    </style>
    <svg viewBox="110 570 1763 400" font-family="Roboto, sans-serif">
      ${area(SAND, '#fdf3d3')}
      <path fill="none" stroke="#fff" stroke-width=".8" d="${thin}"/>
      <path fill="none" stroke="#fff" stroke-width="1.300" d="${mid}"/>
      ${area(['A330,340 350,345 500,560 490,600 470,560 390,480 320,550 300,540 360,470 310,360'], '#dddddf')}
      ${area(['C345,75 380,75 410,110 340,120', 'B870,150 895,145 900,190 880,190'], '#fadfdd')}
      ${area(['D380,400 560,370 680,510 720,615 640,615 400,500', 'E0,30 80,100 120,170 0,230', 'F440,330 700,330 920,430 930,520 700,440 520,390', 'C450,40 600,40 600,150 440,110', 'C440,180 590,200 570,330 440,300', 'H0,60 180,40 230,70 350,90 350,200 270,280 280,380 100,400 0,380', 'G640,90 760,60 790,180 760,250 640,220', 'G880,240 1000,280 990,380 880,310'], '#e8e8e8')}
      ${area(PARKS, '#ceedce')}${area(GREYS, '#e8e7e6')}${area(WATER, '#aadaff')}
      ${line(RIVERS, '#a9d3f7', 1.2)}
      ${line(RAILS, '#d3d5d9', 1.6)}
      ${line(AVENUES, '#fff', 2)}
      ${line(HIGHWAYS, '#f6cd70', 6)}${line(HIGHWAYS, '#ffeaa0', 4.4)}
      ${pins}
      <g paint-order="stroke" stroke="#fff" stroke-opacity=".85" stroke-width="2.400" stroke-linejoin="round">${labels}${roads}
        <text transform="translate(${r[0]} ${r[1]}) rotate(-36)" font-size="12" fill="#8a4a10">Rodoanel Mário</text>
      </g>
      ${stations}
      <g fill="none" stroke="#0a80ff" stroke-opacity=".56" stroke-width="7.300" stroke-linejoin="round">${ROUTE.map(s => `<path d="${poly(s)}"/>`).join('')}</g>
      <path id="est" fill="none" d="M${est.map(p => p.map(f1).join(' ')).join('L')}"/>
      <text font-size="10.300" fill="#6b5a48"><textPath href="#est">Av. dos Estados</textPath></text>
      <g font-size="8.500" fill="#333" text-anchor="middle">
        <path d="M565 714h19v13q-1 1-9.500 3-8.500-2-9.500-3z" fill="#fff" stroke="#555"/><text x="574.500" y="725">050</text>
        <rect x="1734.500" y="870.500" width="35" height="11" fill="#fff" stroke="#555"/><text x="1752" y="879.500" textLength="28">SP-021</text>
      </g>
      <circle cx="1434.500" cy="967" r="10" fill="#f3aaa5" opacity=".7"/>
      <text x="110" y="957" font-size="14" fill="#d56e0c">ri</text>
      <text x="116.500" y="963" font-size="22" font-weight="500" stroke="#fff" stroke-width="1.600" paint-order="stroke" textLength="62"><tspan fill="#4285f4">G</tspan><tspan fill="#ea4335">o</tspan><tspan fill="#fbbc05">o</tspan><tspan fill="#4285f4">g</tspan><tspan fill="#34a853">l</tspan><tspan fill="#ea4335">e</tspan></text>
      ${stops}
    </svg>
    <div class="legal"><span style="width:94px">Atalhos do teclado</span><span style="width:168px;border:0;padding-left:6px">Dados cartográficos ©2022 Google</span><span style="width:77px">Termos de Uso</span><span style="width:112px">Informar erro no mapa</span></div>`;
  }
});
</script>
</body>
</html>
